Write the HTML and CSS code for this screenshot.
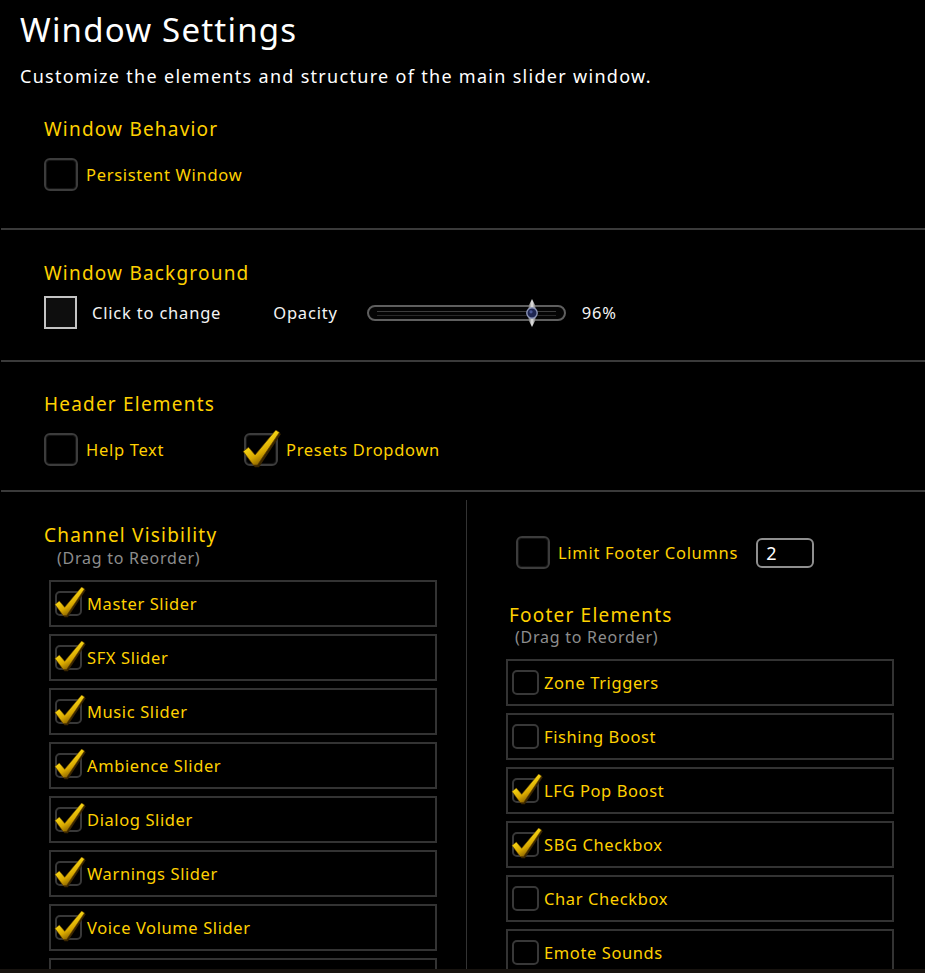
FILE: index.html
```html
<!DOCTYPE html>
<html lang="en">
<head>
<meta charset="utf-8">
<title>Window Settings</title>
<link rel="stylesheet" href="styles.css">
</head>
<body>
<svg class="defs" width="0" height="0" aria-hidden="true">
  <defs>
    <linearGradient id="gold" x1="0" y1="0" x2="0.6" y2="1">
      <stop offset="0" stop-color="#fff7a0"/>
      <stop offset="0.35" stop-color="#ffe21a"/>
      <stop offset="0.7" stop-color="#d8a800"/>
      <stop offset="1" stop-color="#6e4a00"/>
    </linearGradient>
    <linearGradient id="silver" x1="0" y1="0" x2="1" y2="0">
      <stop offset="0" stop-color="#6d6d6d"/>
      <stop offset="0.5" stop-color="#e6e6e6"/>
      <stop offset="1" stop-color="#777"/>
    </linearGradient>
    <symbol id="chk" viewBox="0 0 32 32">
      <path d="M2 19 L6 15.5 L11.5 22 L29 0.5 L32 2.5 L13.5 30.5 L10 30.5 Z" fill="#3a2600" transform="translate(0.8 0.8)"/>
      <path d="M1 18 L5.5 14.5 L11 21 L28.5 0 L31.5 2 L13 29.5 L9.5 29.5 Z" fill="url(#gold)" stroke="#5a3c00" stroke-width="0.6"/>
    </symbol>
  </defs>
</svg>

<div class="page">
  <header class="intro">
    <h1 class="title">Window Settings</h1>
    <p class="subtitle">Customize the elements and structure of the main slider window.</p>
  </header>

  <section class="sec sec-behavior">
    <h2 class="sec-title">Window Behavior</h2>
    <div class="opts">
      <div class="opt"><span class="cb"></span><span class="opt-label">Persistent Window</span></div>
    </div>
  </section>
  <div class="hdiv"></div>

  <section class="sec sec-bg">
    <h2 class="sec-title">Window Background</h2>
    <div class="bg-row">
      <span class="swatch"></span>
      <span class="white-label click-label">Click to change</span>
      <span class="white-label opacity-label">Opacity</span>
      <div class="slider">
        <span class="slider-line"></span>
        <svg class="thumb" style="left:84%" viewBox="0 0 16 28" width="16" height="28">
          <polygon points="8,0 11.5,7 11.5,21 8,28 4.5,21 4.5,7" fill="url(#silver)"/>
          <circle cx="8" cy="14" r="5.2" fill="#1e2652" stroke="#8d96b8" stroke-width="1.4"/>
          <circle cx="7" cy="12.8" r="1.6" fill="#4a5796"/>
        </svg>
      </div>
      <span class="white-label pct">96%</span>
    </div>
  </section>
  <div class="hdiv"></div>

  <section class="sec sec-header">
    <h2 class="sec-title">Header Elements</h2>
    <div class="opts">
      <div class="opt opt-wide"><span class="cb"></span><span class="opt-label">Help Text</span></div>
      <div class="opt"><span class="cb checked"><svg class="chk-lg"><use href="#chk"/></svg></span><span class="opt-label">Presets Dropdown</span></div>
    </div>
  </section>
  <div class="hdiv"></div>

  <div class="cols">
    <div class="col col-left">
      <h2 class="sec-title">Channel Visibility</h2>
      <p class="drag drag-left">(Drag to Reorder)</p>
      <div class="rows">
        <div class="row"><span class="cb-sm"><svg class="chk-sm"><use href="#chk"/></svg></span><span class="row-label">Master Slider</span></div>
        <div class="row"><span class="cb-sm"><svg class="chk-sm"><use href="#chk"/></svg></span><span class="row-label">SFX Slider</span></div>
        <div class="row"><span class="cb-sm"><svg class="chk-sm"><use href="#chk"/></svg></span><span class="row-label">Music Slider</span></div>
        <div class="row"><span class="cb-sm"><svg class="chk-sm"><use href="#chk"/></svg></span><span class="row-label">Ambience Slider</span></div>
        <div class="row"><span class="cb-sm"><svg class="chk-sm"><use href="#chk"/></svg></span><span class="row-label">Dialog Slider</span></div>
        <div class="row"><span class="cb-sm"><svg class="chk-sm"><use href="#chk"/></svg></span><span class="row-label">Warnings Slider</span></div>
        <div class="row"><span class="cb-sm"><svg class="chk-sm"><use href="#chk"/></svg></span><span class="row-label">Voice Volume Slider</span></div>
        <div class="row"><span class="cb-sm"></span></div>
      </div>
    </div>
    <div class="vline"></div>
    <div class="col col-right">
      <div class="opt limit-row"><span class="cb"></span><span class="opt-label">Limit Footer Columns</span><span class="num-input">2</span></div>
      <h2 class="sec-title footer-title">Footer Elements</h2>
      <p class="drag drag-right">(Drag to Reorder)</p>
      <div class="rows">
        <div class="row"><span class="cb-sm"></span><span class="row-label">Zone Triggers</span></div>
        <div class="row"><span class="cb-sm"></span><span class="row-label">Fishing Boost</span></div>
        <div class="row"><span class="cb-sm"><svg class="chk-sm"><use href="#chk"/></svg></span><span class="row-label">LFG Pop Boost</span></div>
        <div class="row"><span class="cb-sm"><svg class="chk-sm"><use href="#chk"/></svg></span><span class="row-label">SBG Checkbox</span></div>
        <div class="row"><span class="cb-sm"></span><span class="row-label">Char Checkbox</span></div>
        <div class="row"><span class="cb-sm"></span><span class="row-label">Emote Sounds</span></div>
      </div>
    </div>
  </div>
</div>
<div class="frame-bottom"></div>
</body>
</html>
```

FILE: styles.css
```css
html, body {
  margin: 0;
  padding: 0;
  background: #000;
  overflow: hidden;
  height: 973px;
}
body {
  font-family: "Noto Sans", "Open Sans", sans-serif;
  color: #fff;
}
.defs {
  position: absolute;
  width: 0;
  height: 0;
}
.page {
  display: flex;
  flex-direction: column;
}
.intro {
  padding: 10px 0 0 20px;
}
.title {
  margin: 0;
  font-size: 33px;
  line-height: 40px;
  font-weight: 400;
  letter-spacing: 1.2px;
  color: #fff;
}
.subtitle {
  margin: 14px 0 0;
  font-size: 18px;
  line-height: 24px;
  letter-spacing: 1.3px;
  color: #fff;
}
.sec {
  padding-left: 44px;
}
.sec-title {
  margin: 0;
  font-size: 19px;
  line-height: 24px;
  font-weight: 400;
  letter-spacing: 1.2px;
  color: #ffd100;
}
.sec-behavior {
  padding-top: 29px;
  padding-bottom: 37px;
}
.sec-bg {
  padding-top: 31px;
  padding-bottom: 31px;
}
.sec-header {
  padding-top: 30px;
  padding-bottom: 24px;
}
.hdiv {
  height: 2px;
  margin-left: 1px;
  background: #3a3a3a;
}
.opts {
  display: flex;
  margin-top: 17px;
}
.opt {
  display: flex;
  align-items: center;
}
.opt-wide {
  width: 200px;
}
.cb {
  position: relative;
  box-sizing: border-box;
  width: 34px;
  height: 33px;
  border: 2px solid #3c3c3c;
  border-radius: 6px;
  background: #000;
  box-shadow: inset 0 0 0 1px #141414;
  flex: none;
}
.opt-label {
  margin-left: 8px;
  font-size: 16.5px;
  letter-spacing: 0.7px;
  color: #ffd100;
}
.chk-lg {
  position: absolute;
  left: -5px;
  top: -5px;
  width: 40px;
  height: 38px;
}
.bg-row {
  display: flex;
  align-items: center;
  margin-top: 11px;
}
.swatch {
  box-sizing: border-box;
  width: 33px;
  height: 33px;
  border: 2px solid #c4c4c4;
  background: #0e0e0e;
  flex: none;
}
.white-label {
  font-size: 16.5px;
  letter-spacing: 0.8px;
  color: #f4f4f4;
}
.click-label {
  margin-left: 15px;
}
.opacity-label {
  margin-left: 52px;
}
.slider {
  position: relative;
  box-sizing: border-box;
  width: 199px;
  height: 16px;
  margin-left: 29px;
  border: 2px solid #5f5f5f;
  border-radius: 8px;
  background: #050505;
}
.slider-line {
  position: absolute;
  left: 8px;
  right: 8px;
  top: 4px;
  height: 3px;
  border-top: 1px solid #3d3d3d;
  border-bottom: 1px solid #2a2a2a;
}
.thumb {
  position: absolute;
  top: 50%;
  transform: translate(-50%, -50%);
}
.pct {
  margin-left: 16px;
}
.cols {
  display: flex;
  align-items: flex-start;
}
.col-left {
  box-sizing: border-box;
  width: 466px;
  padding-top: 31px;
  padding-left: 44px;
}
.vline {
  width: 1px;
  align-self: stretch;
  margin-top: 8px;
  background: #333;
  height: 480px;
}
.col-right {
  box-sizing: border-box;
  flex: 1;
  padding-top: 44px;
  padding-left: 39px;
}
.drag {
  margin: 1px 0 0;
  font-size: 16px;
  line-height: 20px;
  letter-spacing: 0.75px;
  color: #8d8d8d;
}
.drag-left {
  padding-left: 13px;
}
.drag-right {
  margin-top: 0;
  padding-left: 9px;
}
.rows {
  display: flex;
  flex-direction: column;
  gap: 7px;
  margin-top: 12px;
}
.col-left .rows {
  margin-left: 5px;
}
.row {
  box-sizing: border-box;
  width: 388px;
  height: 47px;
  border: 2px solid #333;
  display: flex;
  align-items: center;
  padding-left: 4px;
  flex: none;
}
.cb-sm {
  position: relative;
  box-sizing: border-box;
  width: 27px;
  height: 25px;
  border: 2px solid #383838;
  border-radius: 5px;
  background: #000;
  flex: none;
}
.chk-sm {
  position: absolute;
  left: -4px;
  top: -6px;
  width: 33px;
  height: 31px;
}
.row-label {
  margin-left: 5px;
  font-size: 16.5px;
  letter-spacing: 0.6px;
  color: #ffd100;
}
.limit-row {
  margin-left: 10px;
}
.num-input {
  box-sizing: border-box;
  width: 58px;
  height: 30px;
  margin-left: 18px;
  padding-left: 8px;
  border: 2px solid #8f8f8f;
  border-radius: 6px;
  background: #000;
  font-size: 18px;
  line-height: 26px;
  color: #fff;
}
.footer-title {
  margin-top: 34px;
  padding-left: 3px;
}
.frame-bottom {
  position: fixed;
  left: 0;
  right: 0;
  bottom: 0;
  height: 4px;
  background: #17130f;
}
```
